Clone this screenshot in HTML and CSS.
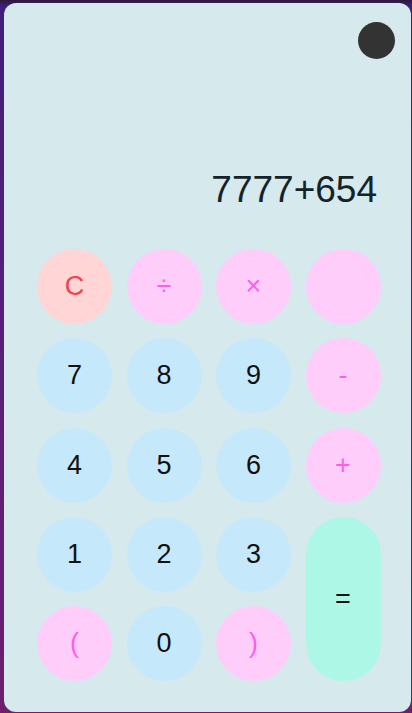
FILE: index.html
```html
<!DOCTYPE html>
<html lang="en">
<head>
<meta charset="utf-8">
<title>Calculator</title>
<link rel="stylesheet" href="styles.css">
</head>
<body>
<div class="calc">
  <div class="top">
    <span class="toggle"></span>
  </div>
  <div class="display">7777+654</div>
  <div class="keys">
    <button class="key clear">C</button>
    <button class="key op">÷</button>
    <button class="key op">×</button>
    <button class="key op"></button>
    <button class="key num">7</button>
    <button class="key num">8</button>
    <button class="key num">9</button>
    <button class="key op">-</button>
    <button class="key num">4</button>
    <button class="key num">5</button>
    <button class="key num">6</button>
    <button class="key op">+</button>
    <button class="key num">1</button>
    <button class="key num">2</button>
    <button class="key num">3</button>
    <button class="key eq">=</button>
    <button class="key op">(</button>
    <button class="key num">0</button>
    <button class="key op">)</button>
  </div>
</div>
</body>
</html>
```
FILE: styles.css
```css
html, body {
  margin: 0;
  padding: 0;
}
body {
  height: 713px;
  overflow: hidden;
  background: linear-gradient(to bottom, #2a1a38 0px, #3f1f7a 6px, #5a2078 50%, #6e1f6c 100%);
  font-family: "Liberation Sans", Arial, sans-serif;
}
.calc {
  box-sizing: border-box;
  margin: 3px 1px 0 4px;
  height: 709px;
  background: #d6e9ec;
  border-radius: 12px;
  padding: 19px 16px 31px 33px;
  display: flex;
  flex-direction: column;
}
.top {
  display: flex;
  justify-content: flex-end;
}
.toggle {
  width: 37px;
  height: 37px;
  border-radius: 50%;
  background: #333333;
}
.display {
  margin-top: 109px;
  margin-right: 18px;
  text-align: right;
  font-size: 37px;
  line-height: 43px;
  color: #13232b;
}
.keys {
  margin-top: 38px;
  display: grid;
  grid-template-columns: repeat(4, 75px);
  grid-auto-rows: 75px;
  gap: 14.3px 14.5px;
}
.key {
  border: none;
  border-radius: 50%;
  font-family: "Liberation Sans", Arial, sans-serif;
  font-size: 27px;
  padding: 0;
  display: flex;
  align-items: center;
  justify-content: center;
  color: #111111;
}
.num {
  background: #c6e8fb;
}
.op {
  background: #ffcdfa;
  color: #ff5fe8;
}
.clear {
  background: #ffd5d5;
  color: #f2434f;
}
.eq {
  grid-column: 4;
  grid-row: 4 / span 2;
  border-radius: 38px;
  background: #adf7e6;
  color: #111111;
}
```
